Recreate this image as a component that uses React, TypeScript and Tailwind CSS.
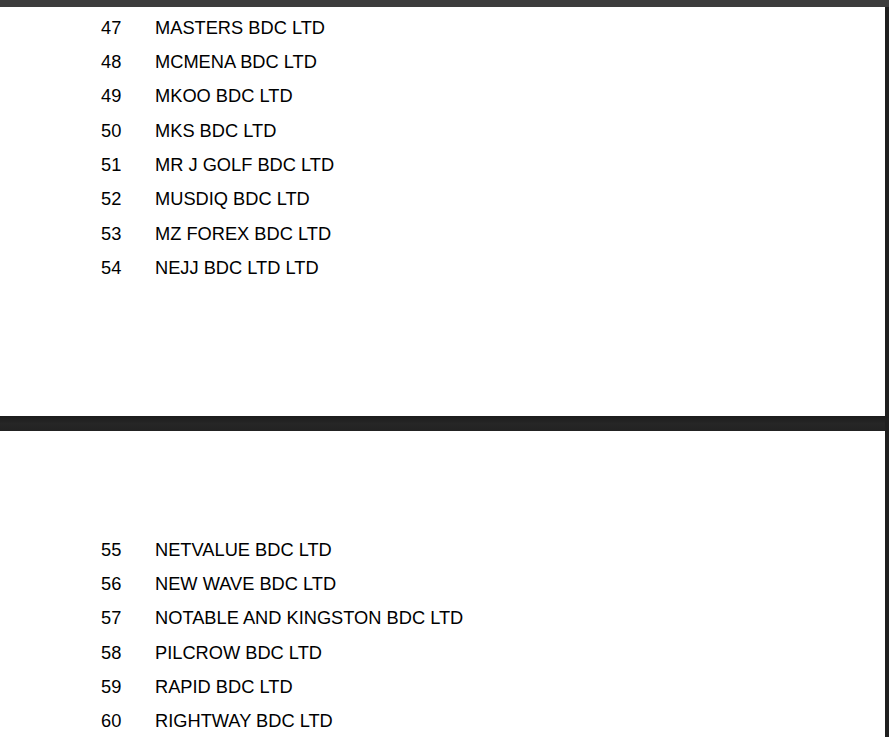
const pageOne = [
  [47, "MASTERS BDC LTD"],
  [48, "MCMENA BDC LTD"],
  [49, "MKOO BDC LTD"],
  [50, "MKS BDC LTD"],
  [51, "MR J GOLF BDC LTD"],
  [52, "MUSDIQ BDC LTD"],
  [53, "MZ FOREX BDC LTD"],
  [54, "NEJJ BDC LTD LTD"],
] as const

const pageTwo = [
  [55, "NETVALUE BDC LTD"],
  [56, "NEW WAVE BDC LTD"],
  [57, "NOTABLE AND KINGSTON BDC LTD"],
  [58, "PILCROW BDC LTD"],
  [59, "RAPID BDC LTD"],
  [60, "RIGHTWAY BDC LTD"],
] as const

function Row({ no, name }: { no: number; name: string }) {
  return (
    <div className="flex h-[34.4px] items-center text-[18.25px] text-black">
      <span className="w-[54px] pl-[101px] box-content">{no}</span>
      <span>{name}</span>
    </div>
  )
}

export default function App() {
  return (
    <div
      className="h-[737px] w-[889px] overflow-hidden bg-[#1f1f1f]"
      style={{ fontFamily: '"Liberation Sans", Arial, sans-serif' }}
    >
      <div className="h-[7px] bg-[#3c3c3c]" />
      <div className="w-[885px]">
        <div className="h-[409px] bg-white pt-[3px]">
          {pageOne.map(([no, name]) => (
            <Row key={no} no={no} name={name} />
          ))}
        </div>
        <div className="h-[15px] bg-gradient-to-b from-[#1c1c1c] via-[#262626] to-[#222222]" />
        <div className="h-[320px] bg-white pt-[101px]">
          {pageTwo.map(([no, name]) => (
            <Row key={no} no={no} name={name} />
          ))}
        </div>
      </div>
    </div>
  )
}
